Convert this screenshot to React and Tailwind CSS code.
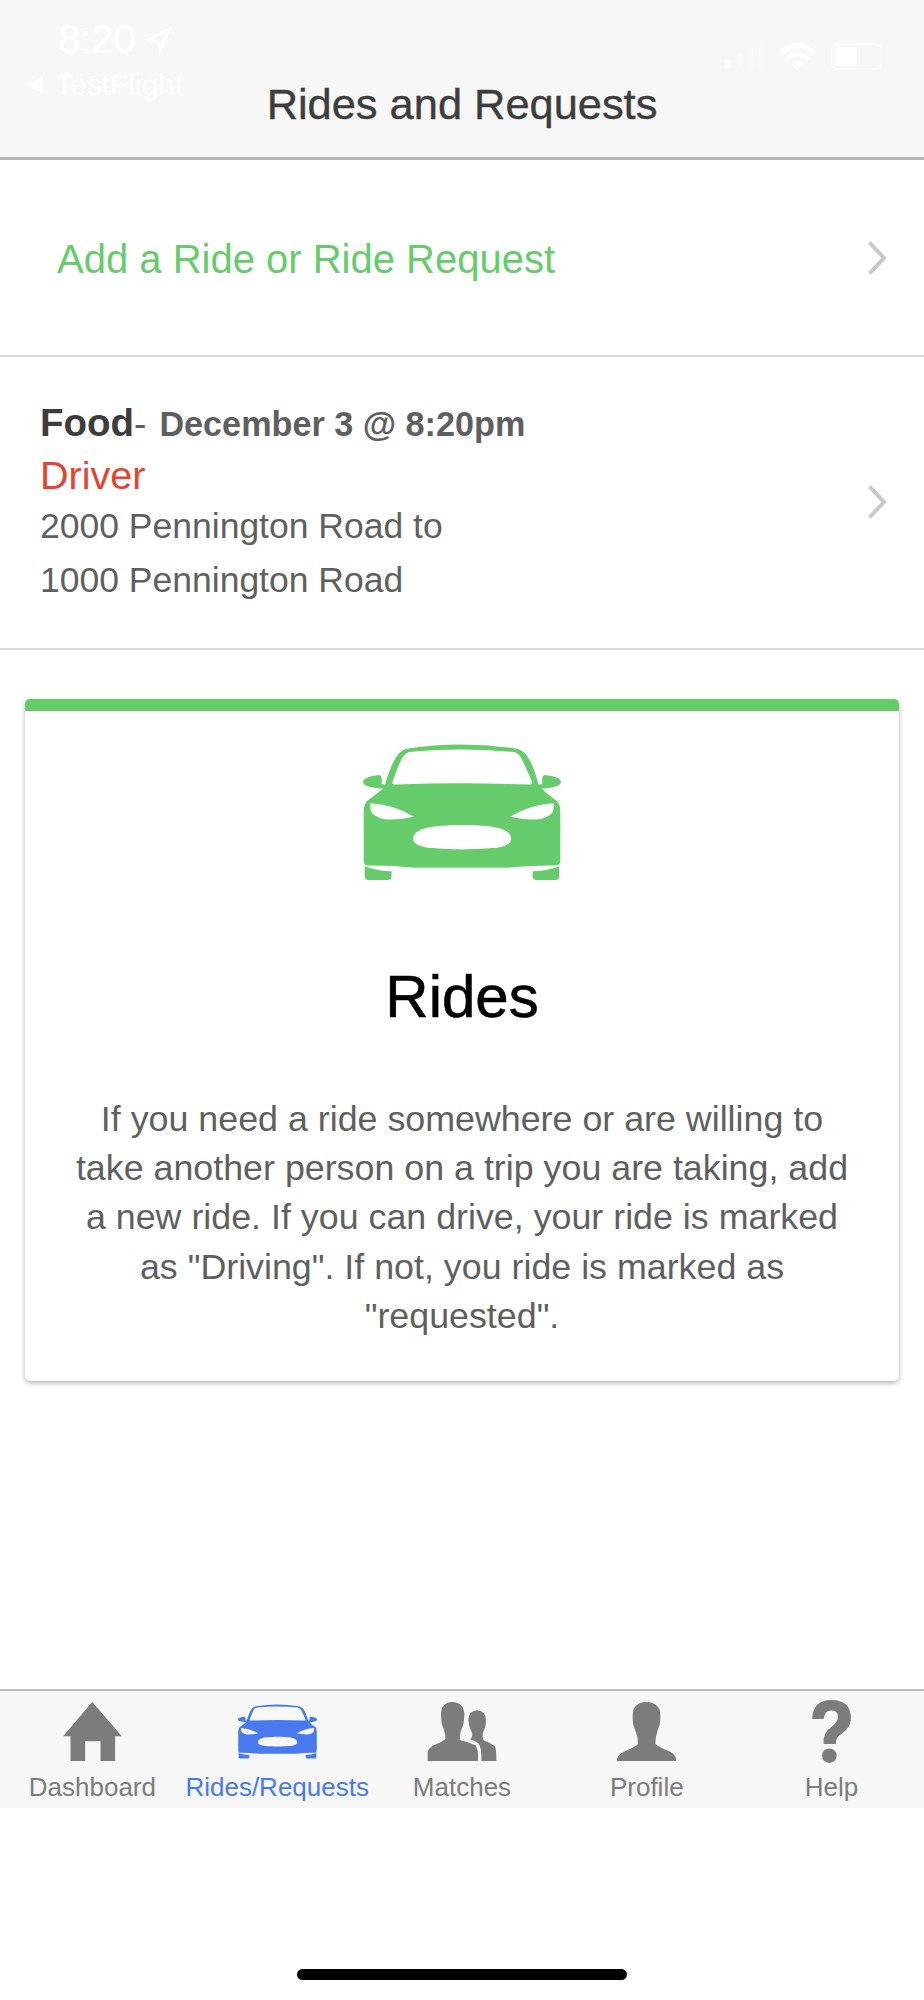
const BODY = "M100 188C100 175 130 168 150 168C157 168 156 185 156 195L166 196Q185 130 205 105Q215 92 235 88Q390 65 555 88Q575 92 587 105Q607 130 625 196L636 195C636 185 635 168 642 168C662 168 692 175 692 188C692 202 660 206 635 208Q650 225 680 245Q690 255 690 280L690 420Q690 435 680 438Q620 436 530 445L260 445Q170 436 110 438Q102 435 102 420L102 280Q102 255 112 245Q140 225 160 208C132 206 100 202 100 188ZM188 190Q200 150 218 115Q226 100 245 98Q390 85 545 98Q564 100 572 115Q590 150 606 190Q607 197 595 196Q390 188 200 196Q186 197 188 190ZM122 252Q190 255 252 292Q210 302 165 300Q126 292 122 270ZM670 252Q602 255 540 292Q582 302 627 300Q666 292 670 270ZM250 358C250 335 285 325 310 322C360 315 440 315 485 322C510 325 543 335 543 358C543 378 510 385 485 386C440 391 350 391 310 386C285 385 250 378 250 358ZM105 440Q145 455 185 455L185 470Q185 480 175 481L115 481Q105 480 105 470ZM687 440Q647 455 607 455L607 470Q607 480 617 481L677 481Q687 480 687 470Z";

function Car({ className }) {
  return (
    <svg viewBox="100 75 592 406" className={className} fill="currentColor">
      <path d={BODY} fillRule="evenodd" />
    </svg>
  );
}

function Chevron({ className }) {
  return (
    <svg viewBox="0 0 20 34" className={className} fill="none" stroke="#c8c8c8" strokeWidth="4">
      <path d="M2.5 1.5 L17 17 L2.5 32.5" />
    </svg>
  );
}

function TabIcon({ name }) {
  if (name === "home")
    return (
      <svg viewBox="68 20 176 177" className="w-[59px] h-[59px]" fill="#7c7c7c">
        <path d="M155 20L244 123L224 123L224 197L180 197L180 138L134 138L134 197L90 197L90 123L68 123Z" />
      </svg>
    );
  if (name === "car") return <Car className="w-[79px] h-[55px] mt-[2px] text-[#4779ef]" />;
  if (name === "matches")
    return (
      <svg viewBox="50 20 210 177" className="w-[70px] h-[59px]" fill="#7c7c7c">
        <path d="M125 20Q162 22 162 58Q162 85 152 105Q147 125 150 135Q175 140 195 150Q205 160 203 197L52 197L52 170Q55 155 80 145Q100 138 105 130Q106 115 100 100Q92 85 92 58Q92 22 125 20Z" />
        <path d="M200 45Q227 47 227 75Q227 95 218 110Q215 125 220 135Q245 145 255 155Q258 165 258 197L213 197Q214 155 205 145Q195 135 180 133Q187 125 186 115Q175 95 174 75Q174 47 200 45Z" />
      </svg>
    );
  if (name === "person")
    return (
      <svg viewBox="620 20 177 177" className="w-[59px] h-[59px]" fill="#7c7c7c">
        <path d="M708 20Q750 22 750 60L750 70Q750 90 742 105Q735 125 735 145Q745 155 770 165Q795 175 797 190L797 197L620 197L620 190Q625 175 650 165Q675 155 683 145Q683 125 675 105Q667 90 667 70L667 60Q667 22 708 20Z" />
      </svg>
    );
  return (
    <svg viewBox="65 15 117 190" className="w-[39px] h-[63px] -mt-[2px]" fill="#7c7c7c">
      <path d="M122 15Q182 15 182 70Q182 100 150 120Q135 130 137 148L100 148Q95 115 125 95Q143 82 143 65Q143 47 122 47Q103 47 100 72L65 72Q68 15 122 15Z" />
      <circle cx="117" cy="183" r="22" />
    </svg>
  );
}

const tabs = [
  { icon: "home", label: "Dashboard" },
  { icon: "car", label: "Rides/Requests", active: true },
  { icon: "matches", label: "Matches" },
  { icon: "person", label: "Profile" },
  { icon: "help", label: "Help" },
];

function StatusBar() {
  return (
    <div className="h-[66px] flex justify-between relative">
      <div className="pl-[58px] pt-[18px] flex items-start gap-[10px] text-white">
        <span className="text-[40px] leading-[42px]">8:20</span>
        <svg viewBox="0 0 25 26" className="w-[25px] h-[26px] mt-[9px]" fill="none" stroke="#ffffff" strokeWidth="2.5">
          <path d="M23 2 L2 13 L12 14 L14 24 Z" />
        </svg>
      </div>
      <div className="pr-[42px] pt-[43px] flex items-start gap-[15px]">
        <div className="flex items-end gap-[6px] h-[27px] pb-[1px]">
          <span className="w-[6px] h-[10px] bg-white rounded-[1px]" />
          <span className="w-[5px] h-[16px] bg-[#f9f9f9] rounded-[1px]" />
          <span className="w-[5px] h-[20px] bg-[#f9f9f9] rounded-[1px]" />
          <span className="w-[5px] h-[24px] bg-[#f9f9f9] rounded-[1px]" />
        </div>
        <svg viewBox="0 0 36 27" className="w-[37px] h-[27px]" fill="#ffffff">
          <path d="M18 0C11 0 5 3 0 8L3 12C7 8 12 5 18 5C24 5 29 8 33 12L36 8C31 3 25 0 18 0ZM18 9C13 9 9 11 6 15L9 18C11 16 14 14 18 14C22 14 25 16 27 18L30 15C27 11 23 9 18 9ZM18 18C16 18 14 19 12 21L18 27L24 21C22 19 20 18 18 18Z" />
        </svg>
        <div className="w-[51px] h-[27px] rounded-[6px] border-2 border-[#fbfbfb] p-[2px]">
          <div className="w-[22px] h-full bg-white rounded-[3px]" />
        </div>
      </div>
    </div>
  );
}

export default function App() {
  return (
    <div className="w-[924px] h-[2000px] flex flex-col bg-white font-['Liberation_Sans',Arial,sans-serif]">
      <header className="h-[160px] shrink-0 bg-[#f7f7f7] border-b-[3px] border-[#b4b4b4] flex flex-col">
        <StatusBar />
        <div className="relative h-[76px]">
          <div className="absolute left-[27px] top-[5px] flex items-center gap-[12px] text-white">
            <span className="w-0 h-0 border-y-[9px] border-y-transparent border-r-[16px] border-r-white" />
            <span className="text-[30px] leading-[28px]">TestFlight</span>
          </div>
          <h1 className="text-center text-[#3d3d3d] text-[43.4px] leading-[44px] pt-[16px] font-normal [-webkit-text-stroke:0.4px_#3d3d3d]">
            Rides and Requests
          </h1>
        </div>
      </header>

      <div className="h-[197px] shrink-0 border-b-2 border-[#dcdcdc] flex items-center justify-between pl-[57px] pr-[37px]">
        <span className="text-[#66cc6b] text-[40px] leading-[44px] pt-[2px]">Add a Ride or Ride Request</span>
        <Chevron className="w-[20px] h-[34px]" />
      </div>

      <div className="h-[293px] shrink-0 border-b-2 border-[#dcdcdc] flex justify-between pl-[40px] pr-[37px] pb-[2px]">
        <div className="text-[#5f5f5f] self-start pt-[39px]">
          <div className="leading-[54px] h-[55px] flex items-baseline">
            <span className="font-bold text-[#3d3d3d] text-[38.5px]">Food</span>
            <span className="text-[37px]">-</span>
            <span className="font-bold text-[34.2px] ml-[13px]">December 3 @ 8:20pm</span>
          </div>
          <div className="text-[#e2452f] text-[39.5px] leading-[48px]">Driver</div>
          <div className="text-[35.5px] leading-[54px]">2000 Pennington Road to</div>
          <div className="text-[35.5px] leading-[54px]">1000 Pennington Road</div>
        </div>
        <Chevron className="w-[20px] h-[34px] self-center" />
      </div>

      <main className="flex-1 px-[25px] pt-[49px]">
        <section className="h-[682px] bg-white rounded-[5px] border-t-[12px] border-[#66cc6b] shadow-[0_2px_5px_rgba(0,0,0,0.3)] flex flex-col items-center">
          <Car className="w-[198px] h-[136px] mt-[33px] text-[#66cc6b]" />
          <h2 className="text-[60px] leading-[66px] mt-[84px] text-black font-normal [-webkit-text-stroke:0.6px_#000000]">Rides</h2>
          <p className="mt-[65px] w-[785px] text-center text-[#5f5f5f] text-[35.8px] leading-[49.2px]">
            If you need a ride somewhere or are willing to take another person on a trip you are taking, add a new ride. If you can drive, your ride is marked as "Driving". If not, you ride is marked as "requested".
          </p>
        </section>
      </main>

      <nav className="h-[119px] shrink-0 bg-[#f7f7f7] border-t-2 border-[#bdbdbd] grid grid-cols-5">
        {tabs.map((t) => (
          <div key={t.label} className="flex flex-col items-center pt-[11px]">
            <div className="h-[59px] flex items-start justify-center">
              <TabIcon name={t.icon} />
            </div>
            <span className={`mt-[12px] text-[26px] leading-[28px] whitespace-nowrap ${t.active ? "text-[#4779ef]" : "text-[#7c7c7c]"}`}>
              {t.label}
            </span>
          </div>
        ))}
      </nav>

      <div className="h-[192px] shrink-0 flex justify-center pt-[161px]">
        <div className="w-[330px] h-[11px] rounded-full bg-black" />
      </div>
    </div>
  );
}
